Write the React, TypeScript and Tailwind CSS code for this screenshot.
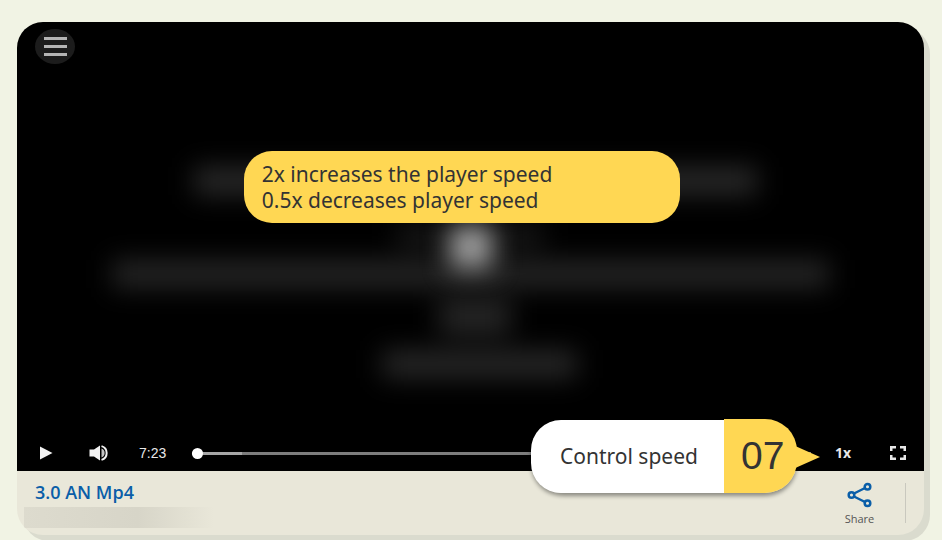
import React from "react";

function AmbientGlow() {
  return (
    <svg
      aria-hidden="true"
      className="absolute inset-0 h-full w-full"
      viewBox="0 0 907 449"
      preserveAspectRatio="none"
    >
      <defs>
        <filter id="soft" x="-50%" y="-150%" width="200%" height="400%" colorInterpolationFilters="sRGB">
          <feGaussianBlur stdDeviation="13" />
        </filter>
        <filter id="bright" x="-150%" y="-150%" width="400%" height="400%" colorInterpolationFilters="sRGB">
          <feGaussianBlur stdDeviation="13" />
        </filter>
      </defs>
      <g filter="url(#soft)">
        <rect x="177" y="145" width="563" height="28" fill="#292929" />
        <rect x="95" y="238" width="717" height="28" fill="#252525" />
        <rect x="422" y="278" width="72" height="34" fill="#262626" />
        <rect x="365" y="328" width="195" height="28" fill="#272727" />
        <rect x="380" y="204" width="146" height="20" fill="#1a1a1a" />
      </g>
      <rect x="433" y="204" width="42" height="42" fill="#a0a0a0" filter="url(#bright)" />
    </svg>
  );
}

function PlayIcon() {
  return (
    <svg width="14" height="14" viewBox="0 0 14 14" fill="#f2f2f2" aria-hidden="true">
      <path d="M1 0.5 13.5 7 1 13.5Z" />
    </svg>
  );
}

function VolumeIcon() {
  return (
    <svg width="21" height="16" viewBox="0 0 21 16" aria-hidden="true">
      <path d="M0.500 4.500H5L11 0.5v15L5 11.500H0.500Z" fill="#f2f2f2" />
      <path d="M12.500 3.500a4.800 4.800 0 0 1 0 9Z" fill="#c4c4c4" />
      <path d="M12.500 1.100a7.200 7.200 0 0 1 0 13.800" fill="none" stroke="#f2f2f2" strokeWidth="2" />
    </svg>
  );
}

function FullscreenIcon() {
  return (
    <svg width="16" height="14" viewBox="0 0 16 14" fill="none" stroke="#e8e8e8" strokeWidth="2.500" aria-hidden="true">
      <path d="M1.250 5V1.250H6M10 1.250h4.750V5M14.750 9v3.750H10M6 12.750H1.250V9" />
    </svg>
  );
}

function ShareIcon() {
  return (
    <svg width="26" height="26" viewBox="0 0 26 26" fill="none" stroke="#0a5ea8" strokeWidth="2.500" aria-hidden="true">
      <path d="M7 11.500 18 6M7 14.500 18 20" />
      <circle cx="4.500" cy="13" r="2.800" />
      <circle cx="20.500" cy="4.800" r="2.800" />
      <circle cx="20.500" cy="21.200" r="2.800" />
    </svg>
  );
}

function Controls() {
  return (
    <div className="flex h-9 items-center pl-[22px] pr-[18px] font-['Open_Sans',sans-serif] text-[14px] text-[#e8e8e8]">
      <button type="button" aria-label="Play" className="w-[50px]">
        <PlayIcon />
      </button>
      <button type="button" aria-label="Volume" className="w-[50px]">
        <VolumeIcon />
      </button>
      <span className="w-[53px] font-['Liberation_Sans',sans-serif]">7:23</span>
      <input
        type="range"
        aria-label="Seek"
        min={0}
        max={100}
        defaultValue={0}
        className="h-[3px] min-w-0 flex-1 appearance-none bg-linear-to-r from-[#a6a6a6] from-[8%] to-[#7d7d7d] to-[8%] [&::-webkit-slider-thumb]:size-[11px] [&::-webkit-slider-thumb]:appearance-none [&::-webkit-slider-thumb]:rounded-full [&::-webkit-slider-thumb]:bg-white"
      />
      <button type="button" aria-label="Playback speed" className="ml-6 w-[55px] text-left leading-5 font-bold">
        1x
      </button>
      <button type="button" aria-label="Fullscreen">
        <FullscreenIcon />
      </button>
    </div>
  );
}

function SpeedCallout() {
  return (
    <div className="absolute right-[127px] bottom-[42px] flex items-end text-[#333]">
      <div className="absolute inset-0 rounded-[32px] shadow-[0_3px_4px_rgba(0,0,0,0.4)]" />
      <div className="relative flex h-[73px] w-[193px] items-center rounded-l-[30px] bg-white pl-[29px] font-['Noto_Sans',sans-serif] text-[21px]">
        Control speed
      </div>
      <div className="relative flex h-[74px] w-[73px] items-center rounded-r-[32px] bg-[#ffd753] pl-[17px] font-['Liberation_Sans',sans-serif] text-[39px]">
        07
      </div>
      <svg className="absolute top-[26px] left-full -ml-1" width="27" height="24" viewBox="0 0 27 24" aria-hidden="true">
        <path d="M0 0 27 12 0 24Z" fill="#ffd753" />
      </svg>
    </div>
  );
}

export default function App() {
  return (
    <main className="flex min-h-screen flex-col bg-[#f1f3e4] pt-[22px] pr-[18px] pb-[5px] pl-[17px]">
      <div className="relative flex flex-1 flex-col">
        <article className="flex flex-1 flex-col overflow-hidden rounded-[26px] bg-[#e9e7d9] shadow-[6px_6px_0_#dadbce]">
          <section className="relative flex flex-1 flex-col justify-between bg-black">
            <AmbientGlow />
            <div className="relative pt-[7px] pl-[18px]">
              <button
                type="button"
                aria-label="Menu"
                className="flex h-[35px] w-10 flex-col items-center justify-center gap-[5px] rounded-[50%] bg-[#1c1c1c]"
              >
                <span className="h-[3px] w-[23px] bg-[#b5b5b5]" />
                <span className="h-[3px] w-[23px] bg-[#b5b5b5]" />
                <span className="h-[3px] w-[23px] bg-[#b5b5b5]" />
              </button>
            </div>
            <div className="relative">
              <Controls />
            </div>
          </section>
          <footer className="flex h-16 justify-between pr-[18px] pl-[7px] font-['Open_Sans',sans-serif]">
            <div>
              <h1 className="pt-[9px] pl-[11px] text-[18px] leading-6 font-semibold text-[#0a5ea8]">3.0 AN Mp4</h1>
              <div className="mt-[3px] h-[21px] w-[190px] bg-linear-to-r from-[#dddbce] via-[#d7d5c8] via-60% to-[#e9e7d9]" />
            </div>
            <div className="flex items-center">
              <button type="button" className="flex w-[91px] flex-col items-center pt-[2px] text-[11px] leading-4 text-[#555]">
                <ShareIcon />
                <span className="mt-[3px]">Share</span>
              </button>
              <span className="h-10 w-px bg-[#c9c8be]" />
            </div>
          </footer>
        </article>
        <p className="absolute top-[129px] left-1/4 h-[72px] w-[436px] rounded-[28px] bg-[#ffd753] px-[18px] py-[10px] font-['Noto_Sans',sans-serif] text-[21px] leading-[26px] whitespace-pre-line text-[#333]">
          {"2x increases the player speed\n0.5x decreases player speed"}
        </p>
        <SpeedCallout />
      </div>
    </main>
  );
}
